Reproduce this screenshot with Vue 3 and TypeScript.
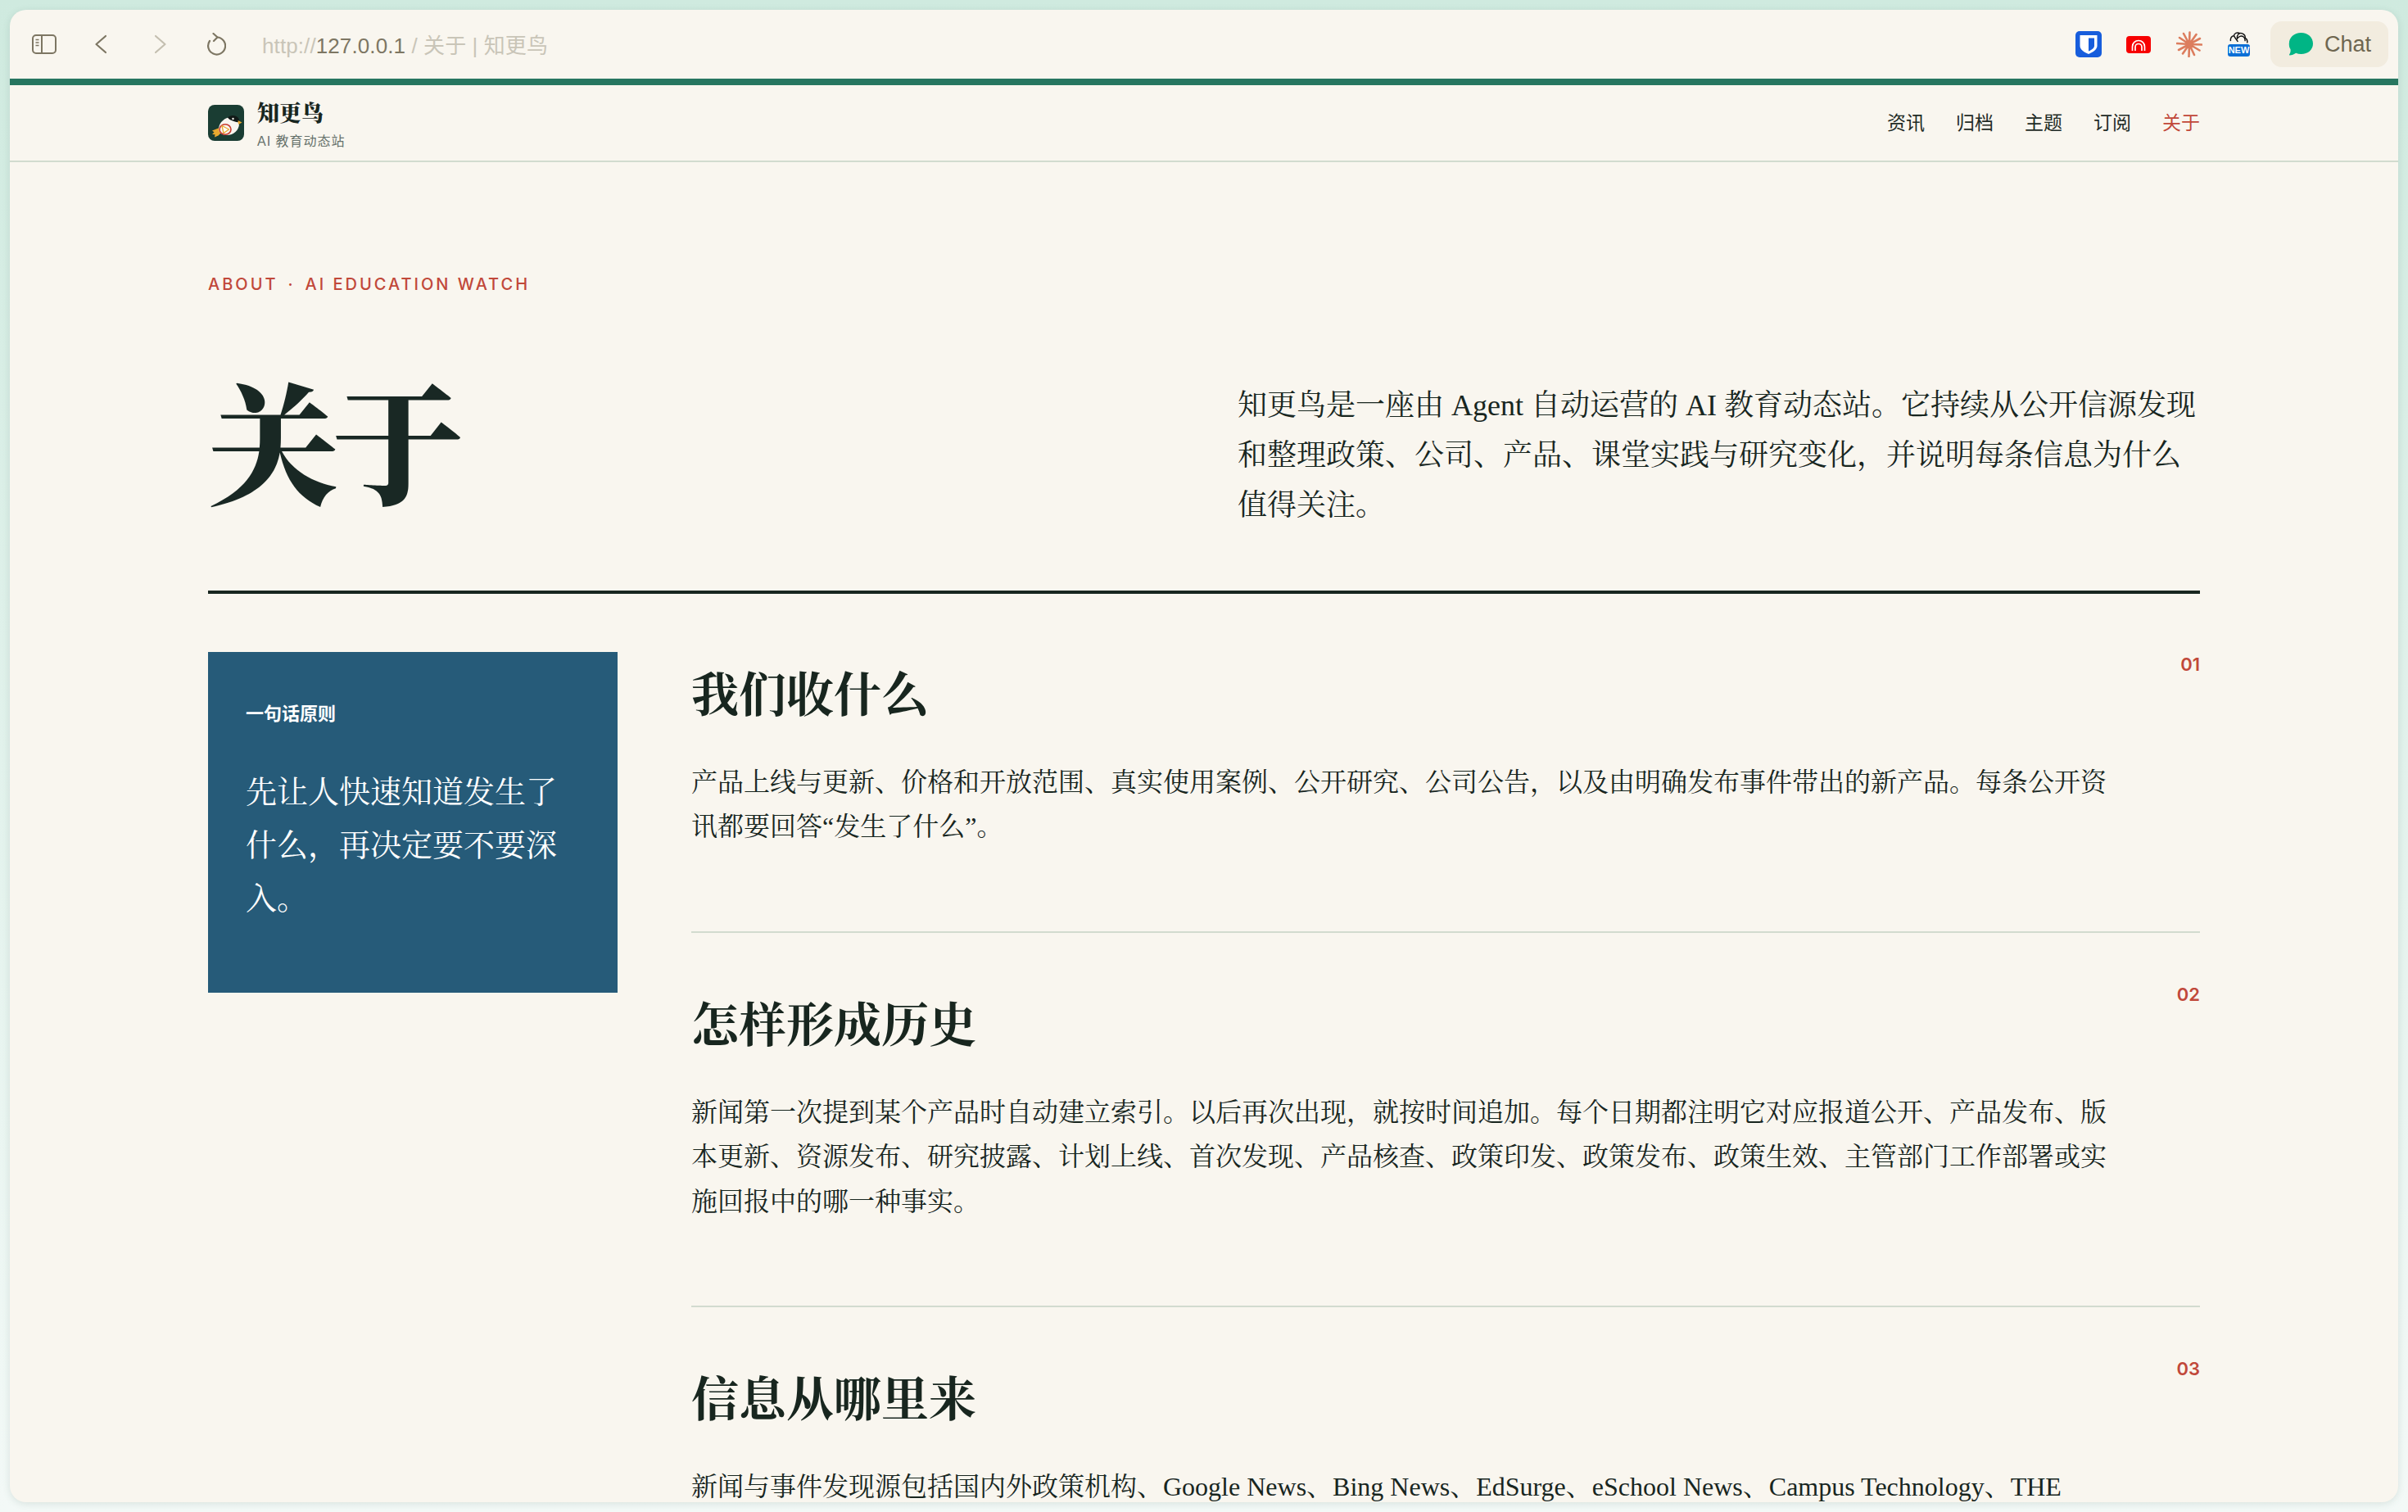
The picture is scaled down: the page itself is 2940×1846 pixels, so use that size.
<script setup lang="ts">
interface Section {
  no: string;
  title: string;
  text: string;
}

const navItems = ['资讯', '归档', '主题', '订阅', '关于'];

const sections: Section[] = [
  {
    no: '01',
    title: '我们收什么',
    text: '产品上线与更新、价格和开放范围、真实使用案例、公开研究、公司公告，以及由明确发布事件带出的新产品。每条公开资讯都要回答“发生了什么”。',
  },
  {
    no: '02',
    title: '怎样形成历史',
    text: '新闻第一次提到某个产品时自动建立索引。以后再次出现，就按时间追加。每个日期都注明它对应报道公开、产品发布、版本更新、资源发布、研究披露、计划上线、首次发现、产品核查、政策印发、政策发布、政策生效、主管部门工作部署或实施回报中的哪一种事实。',
  },
  {
    no: '03',
    title: '信息从哪里来',
    text: '新闻与事件发现源包括国内外政策机构、Google News、Bing News、EdSurge、eSchool News、Campus Technology、THE',
  },
];
</script>

<template>
  <div class="desktop">
    <div class="window">
      <div class="toolbar">
        <svg class="tool-icon sidebar" viewBox="0 0 30 24" fill="none" stroke="#7d7663" stroke-width="2">
          <rect x="1" y="1" width="28" height="22" rx="4" />
          <path d="M12 1v22" />
          <path d="M4.5 6.500h4M4.5 10h4M4.5 13.500h4" stroke-width="1.600" />
        </svg>
        <svg class="tool-icon back" viewBox="0 0 16 24" fill="none" stroke="#7d7663" stroke-width="2.200" stroke-linecap="round" stroke-linejoin="round">
          <path d="M14 2 2.500 12 14 22" />
        </svg>
        <svg class="tool-icon forward" viewBox="0 0 16 24" fill="none" stroke="#c4bfb0" stroke-width="2.200" stroke-linecap="round" stroke-linejoin="round">
          <path d="M2 2l11.500 10L2 22" />
        </svg>
        <svg class="tool-icon reload" viewBox="0 0 24 28" fill="none" stroke="#7d7663" stroke-width="2.200" stroke-linecap="round" stroke-linejoin="round">
          <path d="M13 5.500A10.500 10.500 0 1 1 4 10" />
          <path d="M8.500 1 13.500 5.500 9 10" />
        </svg>
        <div class="url">
          <span class="url-dim">http://</span><span class="url-host">127.0.0.1</span><span class="url-dim"> / 关于 | 知更鸟</span>
        </div>

        <div class="extensions">
          <svg class="ext-bitwarden" viewBox="0 0 32 32">
            <rect width="32" height="32" rx="5" fill="#175ddc" />
            <path d="M5.500 5h21v13c0 4.500-5 7.500-10.500 10C10.500 25.500 5.500 22.500 5.500 18z" fill="#fff" />
            <path d="M16 8.500h7v9.500c0 2.800-3.500 5-7 6.500z" fill="#175ddc" />
          </svg>
          <svg class="ext-red" viewBox="0 0 30 21">
            <rect width="30" height="21" rx="4" fill="#f70000" />
            <g fill="none" stroke="#fff" stroke-width="1.700">
              <path d="M7.500 18v-5a7.500 7.500 0 0 1 15 0v5" />
              <path d="M11 18v-4.500a4 4 0 0 1 8 0V18" />
            </g>
          </svg>
          <svg class="ext-star" viewBox="0 0 32 32" stroke="#dc7d5e" stroke-width="2.600" stroke-linecap="round">
            <path d="M16 16 16.500 1.500M16 16 24.500 4M16 16 29 9M16 16 31 16.500M16 16 28.500 23.500M16 16 22 29M16 16 15.500 31M16 16 8 27.500M16 16 3 23M16 16 1 15M16 16 4 8M16 16 9 3" />
            <circle cx="16" cy="16" r="3.500" fill="#dc7d5e" stroke="none" />
          </svg>
          <div class="ext-new">
            <svg viewBox="0 0 29 20" fill="none" stroke="#111" stroke-width="1.800">
              <path d="M2 14C1 9 4 6 7 6c0-4 5-6 9-4 4-1 9 3 8 7 3 2 4 5 3 8" />
              <path d="M7 6c1 3 4 5 6 9M16 2c-3 1-5 5-4 8 2-3 6-5 9-3 2 1 3 4 3 7" />
            </svg>
            <span class="new-tag">NEW</span>
          </div>
          <div class="chat-pill">
            <svg viewBox="0 0 30 28">
              <path d="M15.500 0C24 0 30 5.800 30 13.200S24 26 15.500 26c-2.300 0-4.400-.4-6.300-1.200C7 26.300 4 27.500 1.800 27.500c-.8 0-1-.7-.6-1.300C2.400 24.600 2.900 22.500 2.500 20 1 18 .8 15.500.8 13.200.8 5.800 7 0 15.500 0z" fill="#00b585" />
            </svg>
            <span>Chat</span>
          </div>
        </div>
      </div>
      <div class="accent-bar"></div>

      <header class="site-header">
        <div class="brand">
          <svg class="logo" viewBox="0 0 44 44">
            <rect width="44" height="44" rx="8" fill="#1a3d33" />
            <path d="M14 28 5 31.500l2.500 2-2.500 2.500 3.500.2-.5 3.300 4.500-2 5-5z" fill="#e9a92f" />
            <path d="M13 30C13 21 21 15 29 15c5 0 9 3 9 8 0 8-7 14-15 14-6 0-10-3-10-7z" fill="#f8f5ef" />
            <path d="M24 15.500C27 12 34 12 37 16c1 1.500 1 3.500 1 5-3 .5-6-.5-8-1.500-2.500-1-5-2-6-4z" fill="#111a17" />
            <path d="M36.500 19l5 2.500-4.500 2.500z" fill="#e9a92f" />
            <circle cx="30.500" cy="17" r="1.200" fill="#f8f5ef" />
            <ellipse cx="21" cy="30" rx="7" ry="6.300" fill="#f8f5ef" stroke="#c83a2e" stroke-width="1.600" />
            <path d="M17 25.500 25.500 30 19 34.500z" fill="#fff" stroke="#e9a92f" stroke-width="1.300" stroke-linejoin="round" />
          </svg>
          <div class="brand-text">
            <div class="brand-name">知更鸟</div>
            <div class="brand-sub">AI 教育动态站</div>
          </div>
        </div>
        <nav class="nav">
          <a v-for="item in navItems" :key="item" class="nav-item" :class="{ active: item === '关于' }">{{ item }}</a>
        </nav>
      </header>

      <main class="page">
        <div class="eyebrow">ABOUT<span class="eyebrow-dot">·</span>AI EDUCATION WATCH</div>
        <div class="hero">
          <h1 class="hero-title">关于</h1>
          <p class="hero-lead">知更鸟是一座由 Agent 自动运营的 AI 教育动态站。它持续从公开信源发现和整理政策、公司、产品、课堂实践与研究变化，并说明每条信息为什么值得关注。</p>
        </div>

        <div class="content">
          <aside class="principle">
            <div class="principle-label">一句话原则</div>
            <p class="principle-text">先让人快速知道发生了什么，再决定要不要深入。</p>
          </aside>
          <div class="sections">
            <section v-for="s in sections" :key="s.no" class="section">
              <div class="section-body">
                <h2 class="section-title">{{ s.title }}</h2>
                <p class="section-text">{{ s.text }}</p>
              </div>
              <span class="section-no">{{ s.no }}</span>
            </section>
          </div>
        </div>
      </main>
    </div>
  </div>
</template>

<style>
html,
body {
  margin: 0;
  height: 100%;
  overflow: hidden;
}
</style>

<style scoped>
.desktop {
  box-sizing: border-box;
  width: 2940px;
  height: 1846px;
  padding: 12px;
  background: linear-gradient(180deg, #cfeadf 0%, #e2f2ec 50%, #f3f9f7 100%);
}

.window {
  height: 100%;
  border-radius: 20px;
  overflow: hidden;
  background: #f9f6ef;
  box-shadow: 0 2px 10px rgba(60, 90, 80, 0.14);
  display: flex;
  flex-direction: column;
}

.toolbar {
  flex: none;
  height: 84px;
  display: flex;
  align-items: center;
  padding-left: 27px;
  padding-right: 12px;
  box-sizing: border-box;
}

.tool-icon {
  display: block;
  flex: none;
}

.sidebar {
  width: 30px;
  height: 24px;
}

.back {
  width: 16px;
  height: 24px;
  margin-left: 46px;
}

.forward {
  width: 16px;
  height: 24px;
  margin-left: 57px;
}

.reload {
  width: 24px;
  height: 28px;
  margin-left: 48px;
}

.url {
  margin-left: 44px;
  margin-top: -2px;
  font-family: "Liberation Sans", "Noto Sans CJK SC", sans-serif;
  font-size: 26px;
  letter-spacing: 0.1px;
  white-space: pre;
}

.url-dim {
  color: #c9c5b8;
}

.url-host {
  color: #7d7663;
}

.extensions {
  margin-left: auto;
  display: flex;
  align-items: center;
}

.ext-bitwarden {
  width: 32px;
  height: 32px;
}

.ext-red {
  width: 30px;
  height: 21px;
  margin-left: 30px;
}

.ext-star {
  width: 32px;
  height: 32px;
  margin-left: 31px;
}

.ext-new {
  width: 29px;
  height: 30px;
  margin-left: 30px;
  display: flex;
  flex-direction: column;
  align-items: center;
}

.ext-new svg {
  width: 29px;
  height: 16px;
  display: block;
}

.new-tag {
  width: 27px;
  height: 15px;
  margin-top: -1px;
  border-radius: 3px;
  background: #0b6fd6;
  color: #fff;
  font-family: "Liberation Sans", sans-serif;
  font-size: 11px;
  font-weight: 700;
  line-height: 15px;
  text-align: center;
}

.chat-pill {
  width: 144px;
  height: 56px;
  margin-left: 24px;
  box-sizing: border-box;
  padding-left: 22px;
  border-radius: 14px;
  background: #f2ecdf;
  display: flex;
  align-items: center;
  gap: 14px;
  color: #6e6650;
  font-family: "Liberation Sans", sans-serif;
  font-size: 27px;
}

.chat-pill svg {
  width: 30px;
  height: 28px;
  flex: none;
}

.accent-bar {
  flex: none;
  height: 8px;
  background: #277660;
}

.site-header {
  flex: none;
  height: 94px;
  box-sizing: border-box;
  padding: 0 242px;
  border-bottom: 2px solid #d2dbcf;
  display: flex;
  align-items: center;
  justify-content: space-between;
}

.brand {
  display: flex;
  align-items: center;
  gap: 16px;
}

.logo {
  width: 44px;
  height: 44px;
  display: block;
}

.brand-text {
  padding-top: 4px;
}

.brand-name {
  font-family: "Noto Serif CJK SC", "Liberation Serif", "Noto Sans CJK SC", serif;
  font-size: 27px;
  font-weight: 900;
  line-height: 34px;
  color: #18261f;
}

.brand-sub {
  margin-top: 8px;
  font-family: "Liberation Sans", "Noto Sans CJK SC", sans-serif;
  font-size: 16px;
  letter-spacing: 1px;
  line-height: 22px;
  color: #66716b;
}

.nav {
  display: flex;
  gap: 38px;
  margin-top: -4px;
}

.nav-item {
  font-family: "Noto Sans CJK SC", sans-serif;
  font-size: 23px;
  color: #1f2b26;
}

.nav-item.active {
  color: #c1483a;
}

.page {
  padding: 136px 242px 0;
}

.eyebrow {
  font-family: "Inter", "Liberation Sans", sans-serif;
  font-size: 20px;
  font-weight: 500;
  line-height: 26px;
  letter-spacing: 3px;
  color: #c1483a;
}

.eyebrow-dot {
  margin: 0 12px;
}

.hero {
  display: grid;
  grid-template-columns: 1fr 1fr;
  column-gap: 82px;
  align-items: start;
  margin-top: 79px;
  padding-bottom: 73px;
  border-bottom: 4px solid #18261f;
}

.hero-title {
  margin: 0;
  font-family: "Noto Serif CJK SC", "Liberation Serif", "Noto Sans CJK SC", serif;
  font-size: 160px;
  font-weight: 900;
  letter-spacing: -8px;
  line-height: 1.2;
  color: #192824;
}

.hero-lead {
  margin: 26px 0 0;
  font-family: "Liberation Serif", "Noto Serif CJK SC", "Noto Sans CJK SC", serif;
  font-size: 36px;
  line-height: 61px;
  color: #18261f;
}

.content {
  display: grid;
  grid-template-columns: 500px 1fr;
  column-gap: 90px;
  align-items: start;
  margin-top: 71px;
}

.principle {
  height: 416px;
  box-sizing: border-box;
  padding: 60px 46px 0;
  background: #265b79;
  color: #fff;
}

.principle-label {
  font-family: "Liberation Sans", "Noto Sans CJK SC", sans-serif;
  font-size: 22px;
  font-weight: 700;
  line-height: 32px;
}

.principle-text {
  margin: 47px 0 0;
  font-family: "Liberation Serif", "Noto Serif CJK SC", "Noto Sans CJK SC", serif;
  font-size: 38px;
  line-height: 65px;
}

.section {
  display: flex;
  justify-content: space-between;
  align-items: flex-start;
  padding: 60px 0 100px;
  border-bottom: 2px solid #d2dbcf;
}

.section:first-child {
  padding-top: 0;
}

.section-title {
  margin: 12px 0 0;
  font-family: "Noto Serif CJK SC", "Liberation Serif", "Noto Sans CJK SC", serif;
  font-size: 58px;
  font-weight: 700;
  line-height: 72px;
  color: #18261f;
}

.section-text {
  width: 1740px;
  margin: 48px 0 0;
  font-family: "Liberation Serif", "Noto Serif CJK SC", "Noto Sans CJK SC", serif;
  font-size: 32px;
  line-height: 54.400px;
  color: #18261f;
}

.section-no {
  font-family: "Inter", "Liberation Sans", sans-serif;
  font-size: 22px;
  font-weight: 600;
  line-height: 30px;
  color: #c1483a;
}
</style>
